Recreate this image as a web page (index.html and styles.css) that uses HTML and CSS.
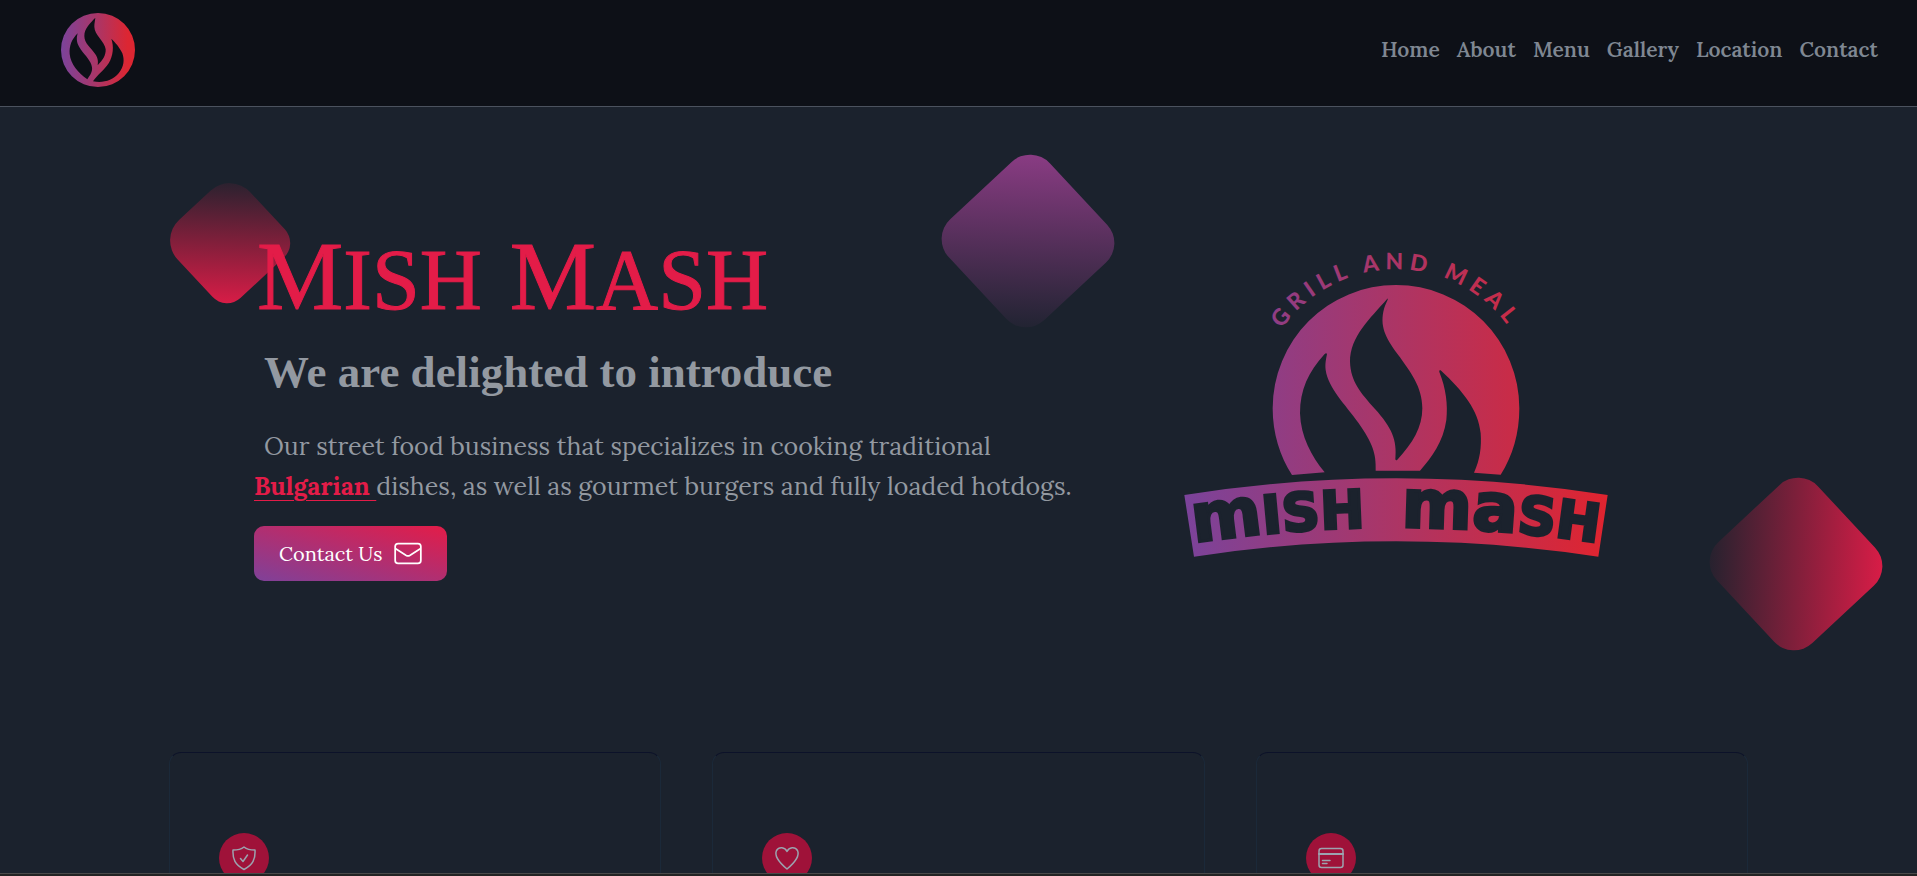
FILE: index.html
```html
<!DOCTYPE html>
<html lang="en">
<head>
<meta charset="utf-8">
<title>Mish Mash</title>
<link rel="stylesheet" href="styles.css">
</head>
<body>
<header class="header">
  <a class="brand" href="#home" aria-label="Mish Mash">
    <svg class="brand-mark" viewBox="63 39 222 222" aria-hidden="true">
      <defs>
        <linearGradient id="brand-fill" gradientUnits="userSpaceOnUse" x1="63" y1="0" x2="285" y2="0">
          <stop offset="0" stop-color="#7b439b"/><stop offset=".5" stop-color="#ac3565"/><stop offset=".9" stop-color="#dc2632"/>
        </linearGradient>
      </defs>
      <path fill="url(#brand-fill)" fill-rule="evenodd" d="M174 39a111 111 0 1 0 0 222a111 111 0 1 0 0-222ZM113 100C95 118 87 138 89 162C92 192 114 218 142 238C150 226 158 216 156 202C153 182 136 168 122 148C110 130 108 118 113 100ZM166 53C150 70 133 85 133 108C133 130 152 142 165 161C174 174 175 184 173 196C188 181 198 166 197 148C195 124 163 105 163 80C163 70 165 62 166 53ZM214 116C222 140 220 166 206 190C192 212 174 222 159 244C188 250 218 242 236 220C252 200 254 180 247 160C238 140 226 128 214 116Z"/>
    </svg>
  </a>
  <nav class="nav">
    <a href="#home">Home</a>
    <a href="#about">About</a>
    <a href="#menu">Menu</a>
    <a href="#gallery">Gallery</a>
    <a href="#location">Location</a>
    <a href="#contact">Contact</a>
  </nav>
</header>
<main>
  <section class="hero" id="home">
    <span class="diamond diamond-small"></span>
    <span class="diamond diamond-purple"></span>
    <span class="diamond diamond-red"></span>
    <div class="intro">
      <h1 class="title"><span><span class="cap">M</span>ISH</span> <span><span class="cap">M</span>ASH</span></h1>
      <h2 class="subtitle">We are delighted to introduce</h2>
      <p class="lead">Our street food business that specializes in cooking traditional<br><a class="accent" href="#about">Bulgarian </a>dishes, as well as gourmet burgers and fully loaded hotdogs.</p>
      <button class="button" type="button">Contact Us
        <svg class="button-icon" viewBox="0 0 24 24" aria-hidden="true"><rect x="1" y="3" width="22" height="17" rx="2.5"/><path d="M1.500 7.500L10.500 13.200Q12 14 13.500 13.200L22.500 7.500"/></svg>
      </button>
    </div>
    <svg class="emblem" viewBox="0 0 1350 990" role="img" aria-label="Mish Mash, grill and meal">
      <defs>
        <linearGradient id="emblem-fill" gradientUnits="userSpaceOnUse" x1="43" y1="0" x2="1313" y2="0">
          <stop offset="0" stop-color="#7b439b"/><stop offset=".5" stop-color="#ac3565"/><stop offset="1" stop-color="#e0242f"/>
        </linearGradient>
        <path id="tagline-arc" d="M261 505A417 417 0 0 1 1095 505"/>
        <path id="name-arc" d="M72 908Q678 816 1284 908"/>
      </defs>
      <g fill="url(#emblem-fill)">
        <path fill-rule="evenodd" d="M366 705C330 650 308 580 308 505A370 370 0 0 1 1048 505C1048 580 1028 648 992 704L912 698C930 660 935 620 932 580C925 510 880 455 812 391Q806 389 808 396C828 445 834 495 829 540C820 605 785 652 750 692L617 692C619 640 608 610 565 548C525 492 475 445 467 390C465 370 468 358 471 342Q469 337 464 342C415 395 390 450 390 520C392 590 425 650 464 697ZM652 176C600 235 540 290 540 365C542 425 572 458 615 507C665 562 682 600 676 658Q678 663 682 659C728 610 757 562 757 505C757 440 720 395 690 352C650 298 630 265 640 215C643 200 648 190 653 179Q654 175 652 176Z"/>
        <path d="M43 765Q678 665 1313 765L1285 950Q678 858 72 950Z"/>
        <text class="tagline"><textPath href="#tagline-arc" startOffset="50%" text-anchor="middle">GRILL AND MEAL</textPath></text>
      </g>
      <text class="wordmark"><textPath href="#name-arc" startOffset="0"><tspan class="tall">m</tspan>ISH</textPath></text>
      <text class="wordmark"><textPath href="#name-arc" startOffset="100%" text-anchor="end"><tspan class="tall">ma</tspan>SH</textPath></text>
    </svg>
  </section>
  <section class="cards">
    <article class="card"><span class="badge"><svg viewBox="0 0 24 24" aria-hidden="true"><path d="M12 1C9.500 3 6 4 1 4C.5 13 3 19 12 23.500C21 19 23.500 13 23 4C18 4 14.500 3 12 1ZM8.500 12.500L11 15.500L15.500 9"/></svg></span></article>
    <article class="card"><span class="badge"><svg viewBox="0 0 24 24" aria-hidden="true"><path d="M12 5.500C10 1 4 .5 1.500 4.500C-1.500 11 6 18 12 23C18 18 25.500 11 22.500 4.500C20 .5 14 1 12 5.500Z"/></svg></span></article>
    <article class="card"><span class="badge"><svg viewBox="0 0 24 24" aria-hidden="true"><rect x="0" y="2.500" width="24" height="19" rx="2.500"/><path stroke-width="2.200" d="M0 8H24"/><path d="M3.500 14.500H11M3.500 17.500H8"/></svg></span></article>
  </section>
</main>
<div class="bottom-bar"></div>
</body>
</html>
```
FILE: styles.css
```css
* { box-sizing: border-box; }

body {
  margin: 0;
  height: 100vh;
  overflow: hidden;
  background: #1b222d;
  color: #9399a1;
  font-family: Lora, "Liberation Serif", serif;
}

.header {
  display: flex;
  justify-content: space-between;
  align-items: flex-start;
  height: 107px;
  padding: 13px 39px 0 61px;
  background: #0d1017;
  border-bottom: 1px solid #4b525e;
}

.brand, .brand-mark { display: block; width: 74px; height: 74px; }

.nav { display: flex; gap: 17px; padding-top: 25px; }

.nav a {
  color: #7f8792;
  font-size: 21px;
  line-height: 24px;
  font-weight: 600;
  text-decoration: none;
}

.hero {
  position: relative;
  display: flex;
  align-items: flex-start;
  height: 645px;
  padding-left: 254px;
}

.intro { position: relative; flex: 0 0 916px; padding-top: 114px; }

.title {
  display: flex;
  gap: 28px;
  margin: 0;
  padding-left: 3px;
  color: #e31c48;
  font-family: "Liberation Serif", "Times New Roman", serif;
  font-size: 86px;
  line-height: 112px;
  font-weight: 400;
  -webkit-text-stroke: 1px #e31c48;
}

.cap { font-size: 97px; }

.subtitle {
  margin: 8px 0 0 10px;
  font-family: "Liberation Serif", "Times New Roman", serif;
  font-size: 45px;
  line-height: 56px;
  font-weight: 700;
}

.lead {
  margin: 26px 0 20px;
  font-size: 25px;
  line-height: 40px;
  text-indent: 10px;
  white-space: nowrap;
}

.accent {
  color: #e31c48;
  font-weight: 700;
  text-decoration: underline;
  text-decoration-thickness: 1px;
  text-underline-offset: 5px;
}

.button {
  display: flex;
  align-items: center;
  gap: 12px;
  height: 55px;
  padding: 0 25px;
  border: 0;
  border-radius: 10px;
  background: linear-gradient(to top right, #7f4199, #e31c48);
  color: #fff;
  font-family: inherit;
  font-size: 20px;
}

.button-icon { width: 28px; height: 28px; fill: none; stroke: #fff; stroke-width: 1.500; }

.emblem { flex: none; width: 450px; height: 330px; margin-top: 133px; }

.tagline { font: 900 68px Lato, sans-serif; letter-spacing: 18px; }

.wordmark {
  font: 700 158px "DejaVu Sans", sans-serif;
  fill: #1b222d;
  stroke: #1b222d;
  stroke-width: 9px;
}

.tall { font-size: 202px; }

.diamond { position: absolute; width: 138px; height: 138px; border-radius: 27px; transform: rotate(47deg); }

.diamond-small {
  left: 179px;
  top: 85px;
  width: 99px;
  height: 99px;
  border-radius: 28px 20px 20px 28px;
  background: linear-gradient(135deg, transparent, #e31c48);
}

.diamond-purple { left: 959px; top: 65px; background: linear-gradient(-45deg, transparent, #903d88); }

.diamond-red { right: 52px; top: 388px; background: linear-gradient(45deg, transparent, #e31c48); }

.cards {
  display: grid;
  grid-template-columns: repeat(3, 1fr);
  gap: 51px;
  max-width: 1579px;
  margin: 0 auto;
}

.card {
  height: 320px;
  padding: 80px 49px;
  border: 1px solid #1b2939;
  border-top-color: #0c1229;
  border-radius: 12px;
}

.badge {
  display: flex;
  align-items: center;
  justify-content: center;
  width: 50px;
  height: 50px;
  border-radius: 50%;
  background: #9f1239;
}

.badge svg {
  width: 24px;
  height: 24px;
  overflow: visible;
  fill: none;
  stroke: #9ca3af;
  stroke-width: 1.500;
  stroke-linecap: round;
  stroke-linejoin: round;
}

.bottom-bar {
  position: fixed;
  left: 0;
  right: 0;
  bottom: 0;
  height: 3px;
  background: #232323;
  border-top: 1px solid #4a4a4a;
}
```
